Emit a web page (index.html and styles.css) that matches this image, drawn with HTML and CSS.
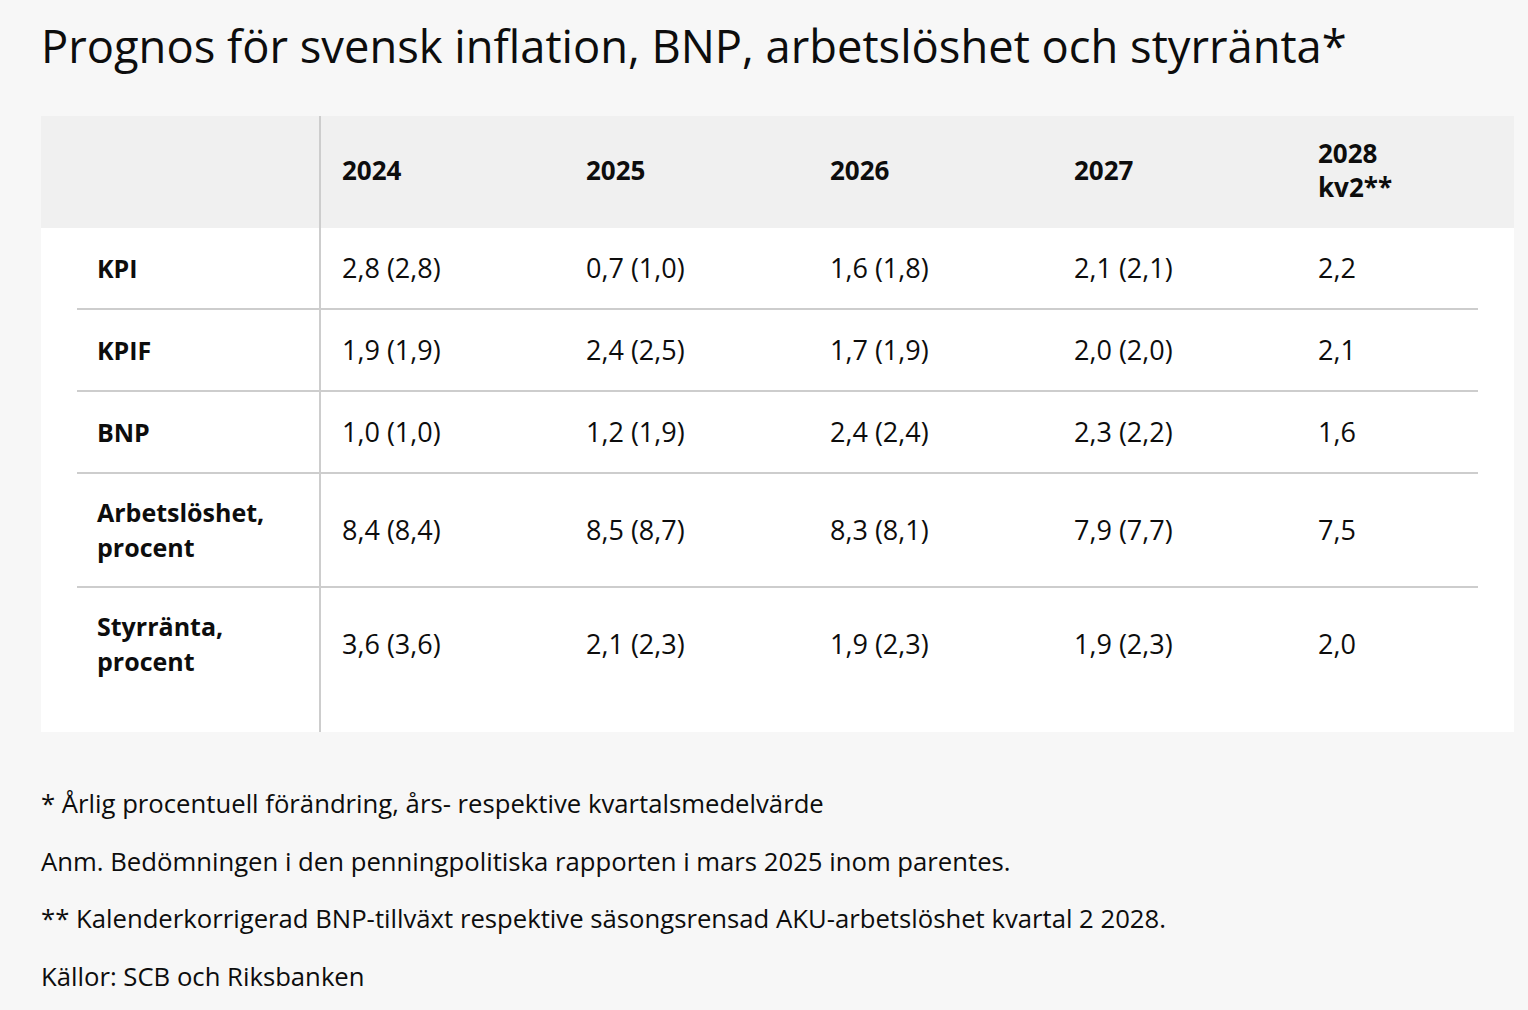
FILE: index.html
```html
<!DOCTYPE html>
<html lang="sv">
<head>
<meta charset="utf-8">
<title>Prognos</title>
<link rel="stylesheet" href="styles.css">
</head>
<body>
<main class="page">
  <h1 class="title">Prognos för svensk inflation, BNP, arbetslöshet och styrränta*</h1>
  <div class="table">
    <div class="head">
      <div class="hcell first"></div>
      <div class="hcell">2024</div>
      <div class="hcell">2025</div>
      <div class="hcell">2026</div>
      <div class="hcell">2027</div>
      <div class="hcell">2028<br>kv2**</div>
    </div>
    <div class="body">
      <div class="row">
        <div class="cell label">KPI</div>
        <div class="cell">2,8 (2,8)</div>
        <div class="cell">0,7 (1,0)</div>
        <div class="cell">1,6 (1,8)</div>
        <div class="cell">2,1 (2,1)</div>
        <div class="cell">2,2</div>
      </div>
      <div class="row">
        <div class="cell label">KPIF</div>
        <div class="cell">1,9 (1,9)</div>
        <div class="cell">2,4 (2,5)</div>
        <div class="cell">1,7 (1,9)</div>
        <div class="cell">2,0 (2,0)</div>
        <div class="cell">2,1</div>
      </div>
      <div class="row">
        <div class="cell label">BNP</div>
        <div class="cell">1,0 (1,0)</div>
        <div class="cell">1,2 (1,9)</div>
        <div class="cell">2,4 (2,4)</div>
        <div class="cell">2,3 (2,2)</div>
        <div class="cell">1,6</div>
      </div>
      <div class="row">
        <div class="cell label">Arbetslöshet,<br>procent</div>
        <div class="cell">8,4 (8,4)</div>
        <div class="cell">8,5 (8,7)</div>
        <div class="cell">8,3 (8,1)</div>
        <div class="cell">7,9 (7,7)</div>
        <div class="cell">7,5</div>
      </div>
      <div class="row last">
        <div class="cell label">Styrränta,<br>procent</div>
        <div class="cell">3,6 (3,6)</div>
        <div class="cell">2,1 (2,3)</div>
        <div class="cell">1,9 (2,3)</div>
        <div class="cell">1,9 (2,3)</div>
        <div class="cell">2,0</div>
      </div>
    </div>
  </div>
  <div class="notes">
    <p>* Årlig procentuell förändring, års- respektive kvartalsmedelvärde</p>
    <p>Anm. Bedömningen i den penningpolitiska rapporten i mars 2025 inom parentes.</p>
    <p>** Kalenderkorrigerad BNP-tillväxt respektive säsongsrensad AKU-arbetslöshet kvartal 2 2028.</p>
    <p>Källor: SCB och Riksbanken</p>
  </div>
</main>
</body>
</html>
```
FILE: styles.css
```css
html, body {
  margin: 0;
  padding: 0;
  background: #f7f7f7;
}

body {
  font-family: "Open Sans", "Noto Sans", sans-serif;
  color: #0d0d0d;
}

.page {
  padding: 0 14px 0 41px;
}

.title {
  margin: 21px 0 45px;
  font-size: 45.3px;
  line-height: 50px;
  font-weight: 400;
  color: #0d0d0d;
}

.table {
  width: 1473px;
  background: #fff;
}

.head {
  display: grid;
  grid-template-columns: 280px repeat(4, 244px) 1fr;
  background: #f0f0f0;
}

.hcell {
  padding: 20px 21px 24px;
  font-size: 26px;
  line-height: 34px;
  font-weight: 700;
  display: flex;
  align-items: center;
}

.hcell.first {
  border-right: 2px solid #cdcdcd;
}

.body {
  padding: 0 36px;
}

.row {
  display: grid;
  grid-template-columns: 244px repeat(4, 244px) 1fr;
  border-bottom: 2px solid #cdcdcd;
}

.row.last {
  border-bottom: none;
}

.cell {
  padding: 24px 21px;
  font-size: 27px;
  line-height: 32px;
  display: flex;
  align-items: center;
}

.cell.label {
  padding: 21px 10px 21px 20px;
  font-size: 25px;
  line-height: 35px;
  font-weight: 700;
  border-right: 2px solid #cdcdcd;
}

.row.last .cell {
  padding-bottom: 56px;
}

.row.last .cell.label {
  padding-bottom: 53px;
}

.notes {
  margin-top: 55px;
  display: flex;
  flex-direction: column;
  gap: 23.5px;
}

.notes p {
  margin: 0;
  font-size: 25.7px;
  line-height: 34px;
}
```
